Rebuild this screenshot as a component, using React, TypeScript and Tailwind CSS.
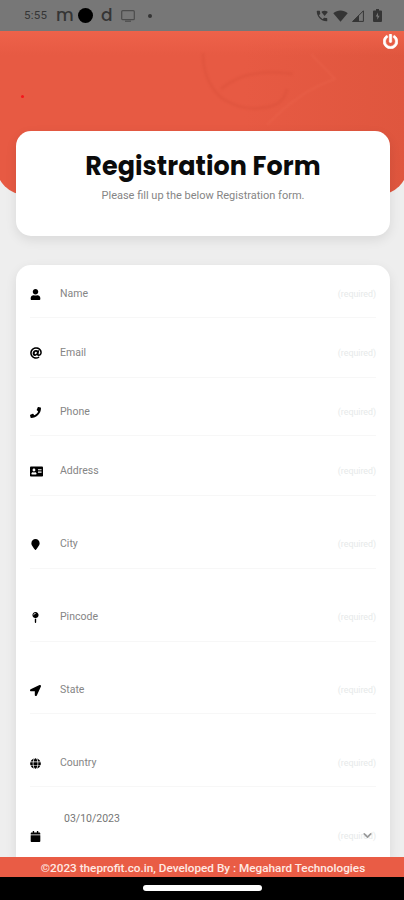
import type { IconType } from "react-icons";
import {
  FaAddressCard,
  FaAt,
  FaCalendar,
  FaGlobe,
  FaLocationArrow,
  FaMapMarker,
  FaMapPin,
  FaPhone,
  FaPowerOff,
  FaUser,
} from "react-icons/fa";
import { FiChevronDown } from "react-icons/fi";
import { MdWifiCalling } from "react-icons/md";

type Field = {
  label: string;
  icon: IconType;
  size: number;
  row: string;
};

const fields: Field[] = [
  { label: "Name", icon: FaUser, size: 11, row: "h-[53px] pb-[13px]" },
  { label: "Email", icon: FaAt, size: 12, row: "h-[60px] pb-[14px]" },
  { label: "Phone", icon: FaPhone, size: 11, row: "h-[58px] pb-[13px]" },
  { label: "Address", icon: FaAddressCard, size: 13, row: "h-[60px] pb-[14px]" },
  { label: "City", icon: FaMapMarker, size: 11, row: "h-[73px] pb-[14px]" },
  { label: "Pincode", icon: FaMapPin, size: 11, row: "h-[73px] pb-[14px]" },
  { label: "State", icon: FaLocationArrow, size: 11, row: "h-[72px] pb-[13px]" },
  { label: "Country", icon: FaGlobe, size: 11, row: "h-[73px] pb-[13px]" },
];

function StatusBar() {
  return (
    <div className="flex h-[31px] shrink-0 items-center bg-[#777777] pl-6 pr-[21px] text-[#353535]">
      <span className="w-8 text-[11.5px] tracking-[0.3px]">5:55</span>
      <span className="w-[22px] font-[Poppins,Inter] text-[17px] font-medium leading-none">m</span>
      <span className="h-[15px] w-[15px] rounded-full bg-black" />
      <span className="ml-2 w-5 font-[Poppins,Inter] text-[17px] font-medium leading-none">d</span>
      <svg className="h-3 w-[14px]" viewBox="0 0 14 12" fill="none" stroke="#4c4c4c" strokeWidth="1.2">
        <rect x="0.7" y="0.7" width="12.6" height="9" rx="1" />
        <path d="M4 11.2h6" />
      </svg>
      <span className="ml-[13px] h-1 w-1 rounded-full bg-[#353535]" />
      <div className="ml-auto flex items-center">
        <MdWifiCalling size={14} />
        <svg className="ml-1 h-3 w-[15px]" viewBox="0 0 15 12" fill="currentColor">
          <path d="M0.3 3.3C4.5-.5 10.5-.5 14.7 3.3L7.5 11.8z" />
        </svg>
        <svg className="ml-[4px] h-3 w-3" viewBox="0 0 12 12" fill="none" stroke="currentColor">
          <path d="M0.8 11.4L11.4 0.8v10.6z" />
          <path d="M0 12L7 5v7z" fill="currentColor" stroke="none" />
        </svg>
        <svg className="ml-[9px] mr-[1px] h-[13px] w-[9px]" viewBox="0 0 9 13">
          <path d="M1 1.5h2V0h3v1.5h2q1 0 1 1V12q0 1-1 1H1q-1 0-1-1V2.5q0-1 1-1z" fill="#353535" />
          <path d="M5 3.5L2.7 7.6h1.6v3.1l2.3-4H5z" fill="#777" />
        </svg>
      </div>
    </div>
  );
}

function Header() {
  return (
    <div className="relative -mx-1 h-[164px] shrink-0 overflow-hidden rounded-b-[30px] bg-linear-to-r from-[#e75a43] from-60% to-[#df563e]">
      <div className="h-6 bg-linear-to-b from-[#ee624a] to-transparent" />
      {/* faint eye drawing behind the card */}
      <svg className="absolute left-[203px] top-[18px] h-24 w-[150px] blur-[1px]" viewBox="0 0 150 96" fill="none" stroke="#d44c36" strokeWidth="3" opacity="0.3">
        <path d="M4 4Q4 34 24 50Q50 66 78 55Q86 50 88 40" />
        <path d="M22 40Q48 18 94 25" />
        <path d="M112 5L136 30Q100 42 68 76" stroke="#ee6a52" strokeWidth="2" />
      </svg>
      <span className="absolute left-[25px] top-[64px] h-[3px] w-[3px] rounded-full bg-[#f5161c]" />
      <FaPowerOff className="absolute right-[10px] top-[3px] text-white" size={15} stroke="currentColor" strokeWidth={24} />
    </div>
  );
}

function Required() {
  return <span className="ml-auto text-[8.8px] leading-none text-[#e6e9e9]">(required)</span>;
}

export default function App() {
  return (
    <div className="flex h-[900px] w-full flex-col overflow-hidden bg-[#eeeeee] font-[Roboto,sans-serif]">
      <StatusBar />
      <Header />

      <div className="relative ml-4 mr-[14px] -mt-16 h-[105px] shrink-0 rounded-[15px] bg-white pt-5 text-center shadow-[0_4px_12px_rgba(0,0,0,0.09)]">
        <h1 className="whitespace-nowrap font-[Poppins,Inter,sans-serif] text-[25.4px] font-bold leading-[30px] tracking-[0.1px] text-[#0b0b0b]">
          Registration Form
        </h1>
        <p className="mt-[7px] text-[11px] leading-4 text-[#858585]">Please fill up the below Registration form.</p>
      </div>

      <div className="ml-4 mr-[14px] mt-[29px] min-h-0 flex-1 overflow-hidden rounded-t-[15px] bg-white px-[14px] shadow-[0_4px_12px_rgba(0,0,0,0.09)]">
        {fields.map(({ label, icon: Icon, size, row }) => (
          <div key={label} className={`flex flex-col justify-end border-b border-[#f7f7f7] ${row}`}>
            <div className="flex h-5 items-center">
              <span className="w-[30px] text-black">
                <Icon size={size} />
              </span>
              <span className="text-[10.5px] leading-none text-[#858585]">{label}</span>
              <Required />
            </div>
          </div>
        ))}
        <div className="pt-[26px]">
          <p className="pl-[34px] text-[10.5px] leading-3 text-[#757575]">03/10/2023</p>
          <div className="flex h-[22px] items-center">
            <FaCalendar size={11} />
            <div className="relative ml-auto flex items-center">
              <Required />
              <FiChevronDown className="absolute right-[2px] text-[#999999]" size={13} strokeWidth={3} />
            </div>
          </div>
        </div>
      </div>

      <div className="relative flex h-5 shrink-0 items-center justify-center whitespace-nowrap bg-[#e95c45] pl-[2px] pt-[3px] text-[11.75px] font-medium text-[#ffe9e3]">
        ©2023 theprofit.co.in, Developed By : Megahard Technologies
      </div>
      <div className="flex h-[23px] shrink-0 justify-center bg-black pt-2">
        <div className="h-[6px] w-[119px] rounded-full bg-white" />
      </div>
    </div>
  );
}
